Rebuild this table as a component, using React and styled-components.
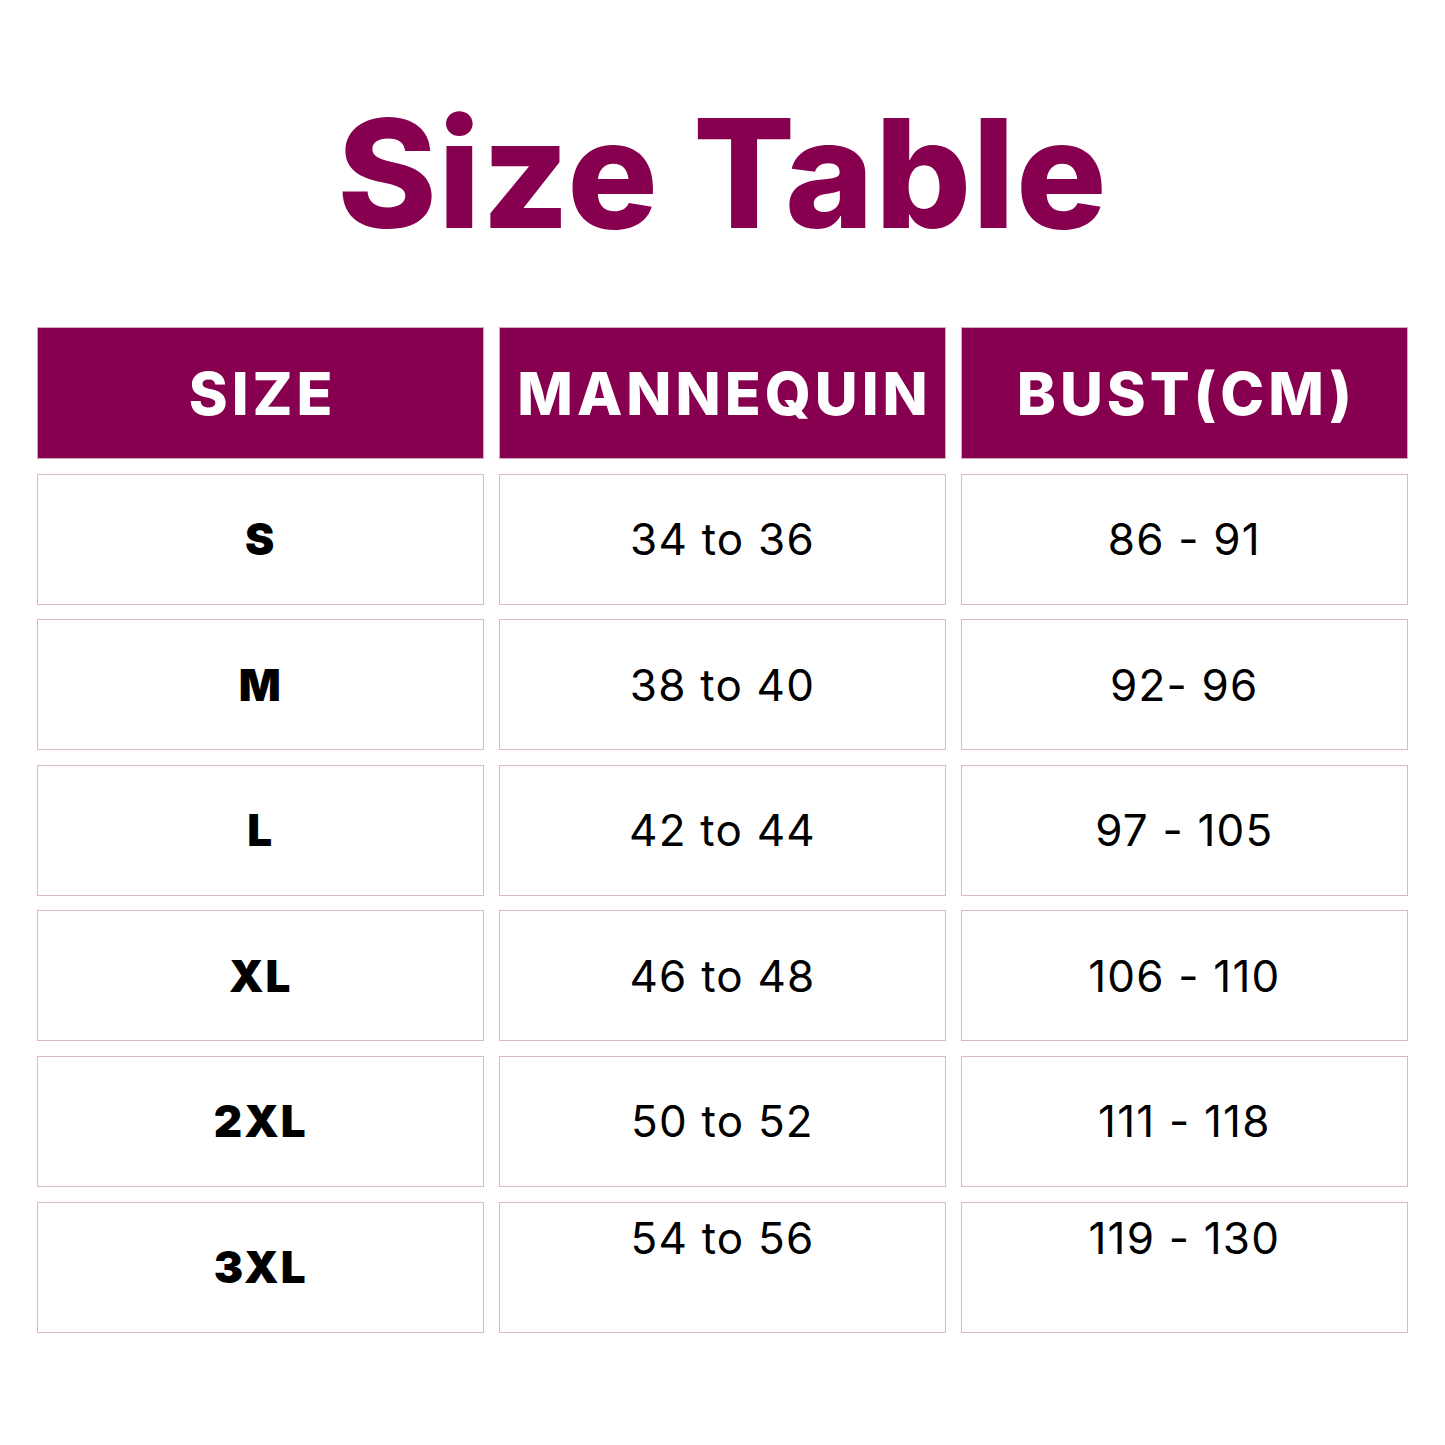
import React from "react";
import styled, { createGlobalStyle } from "styled-components";

const Global = createGlobalStyle`
  html, body { margin: 0; padding: 0; background: #ffffff; }
  body { font-family: Inter, "Liberation Sans", sans-serif; }
`;

const Page = styled.div`
  width: 1445px;
  height: 1445px;
  box-sizing: border-box;
  padding: 97px 37px 0 37px;
  background: #fff;
`;

const Title = styled.h1`
  margin: 0 0 78px;
  height: 152px;
  font-family: Inter, "Liberation Sans", sans-serif;
  font-weight: 800;
  font-size: 151px;
  line-height: 152px;
  letter-spacing: 1px;
  text-align: center;
  color: #87004f;
`;

const Table = styled.div`
  display: grid;
  grid-template-columns: repeat(3, 1fr);
  grid-template-rows: 132px;
  grid-auto-rows: 131px;
  column-gap: 14.5px;
  row-gap: 14.6px;
`;

const HeadCell = styled.div`
  display: flex;
  align-items: center;
  justify-content: center;
  background: #87004f;
  border: 1px solid #d7a9bf;
  font-family: Inter, "Liberation Sans", sans-serif;
  font-weight: 800;
  font-size: 59px;
  letter-spacing: 4px;
  color: #ffffff;
  padding-left: 4px;
`;

const Cell = styled.div`
  display: flex;
  justify-content: center;
  align-items: ${(p) => (p.$top ? "flex-start" : "center")};
  padding-top: ${(p) => (p.$top ? "8px" : "0")};
  border: 1px solid #dcb7c4;
  background: #fff;
  color: #000;
  font-family: Inter, "Liberation Sans", sans-serif;
  font-size: 44px;
  font-weight: ${(p) => (p.$bold ? 900 : 400)};
  letter-spacing: ${(p) => (p.$bold ? "2px" : "1.2px")};
`;

const header = ["SIZE", "MANNEQUIN", "BUST(CM)"];
const rows = [
  ["S", "34 to 36", "86 - 91"],
  ["M", "38 to 40", "92- 96"],
  ["L", "42 to 44", "97 - 105"],
  ["XL", "46 to 48", "106 - 110"],
  ["2XL", "50 to 52", "111 - 118"],
  ["3XL", "54 to 56", "119 - 130", true],
];

export default function App() {
  return (
    <>
      <Global />
      <Page>
        <Title>Size Table</Title>
        <Table>
          {header.map((h) => (
            <HeadCell key={h}>{h}</HeadCell>
          ))}
          {rows.map(([s, m, b, top]) => (
            <React.Fragment key={s}>
              <Cell $bold>{s}</Cell>
              <Cell $top={top}>{m}</Cell>
              <Cell $top={top}>{b}</Cell>
            </React.Fragment>
          ))}
        </Table>
      </Page>
    </>
  );
}
